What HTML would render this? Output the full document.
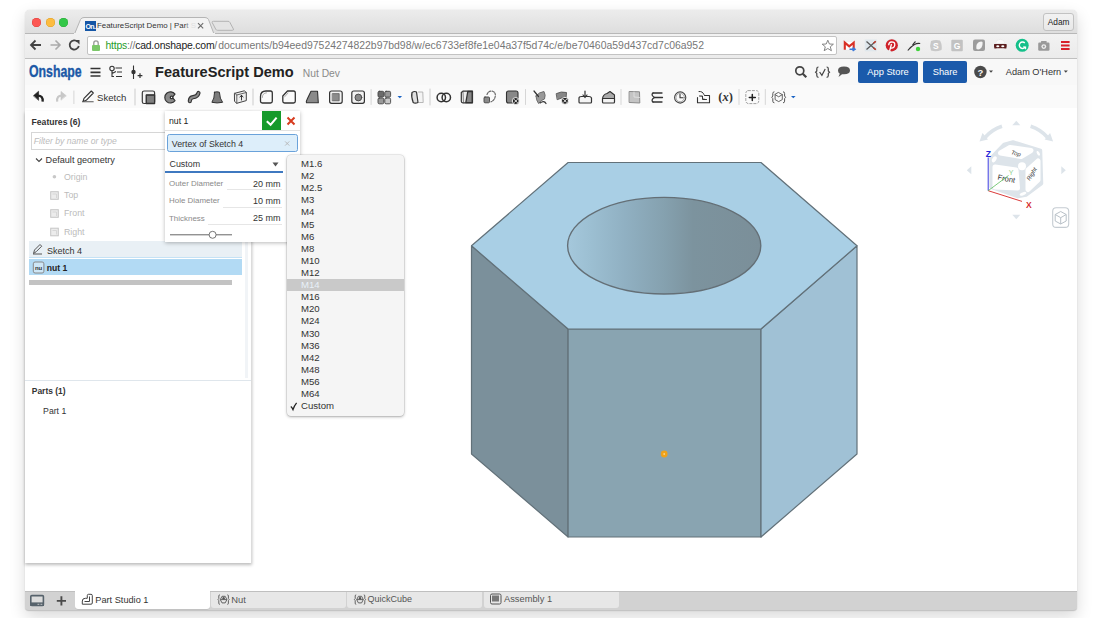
<!DOCTYPE html>
<html><head><meta charset="utf-8">
<style>
*{margin:0;padding:0;box-sizing:border-box}
html,body{width:1100px;height:618px;overflow:hidden;background:#fff;font-family:"Liberation Sans",sans-serif;color:#333}
.a{position:absolute}
.t{position:absolute;white-space:nowrap;line-height:1}
svg{position:absolute;overflow:visible}
</style></head><body>
<!-- window frame -->
<div class="a" style="left:25px;top:10px;width:1052px;height:600.5px;border-radius:5px 5px 4px 4px;background:#fff;box-shadow:0 6px 16px rgba(0,0,0,0.15),0 0 1px rgba(0,0,0,0.25)"></div>
<!-- tab strip -->
<div class="a" style="left:25px;top:10px;width:1052px;height:24px;border-radius:5px 5px 0 0;background:linear-gradient(#ececec,#dedede);border-bottom:1px solid #b8b8b8"></div>
<div class="a" style="left:32px;top:18px;width:9px;height:9px;border-radius:50%;background:#fc5753;box-shadow:inset 0 0 0 0.5px #df3e3a"></div>
<div class="a" style="left:46px;top:18px;width:9px;height:9px;border-radius:50%;background:#fdbc40;box-shadow:inset 0 0 0 0.5px #de9e22"></div>
<div class="a" style="left:59px;top:18px;width:9px;height:9px;border-radius:50%;background:#33c748;box-shadow:inset 0 0 0 0.5px #27aa35"></div>
<svg width="1100" height="40" style="left:0;top:0">
  <path d="M74.5 34 L80.5 19.5 Q81.5 17.5 84 17.5 L205 17.5 Q207.5 17.5 208.5 19.5 L214 34 Z" fill="#f3f3f3" stroke="#b5b5b5" stroke-width="1"/>
  <path d="M213.5 21.3 L228 21.3 Q229.3 21.3 229.9 22.4 L233.4 29 Q233.9 30.3 232.4 30.3 L217.5 30.3 Q216.3 30.3 215.8 29.3 L212.2 22.6 Q211.8 21.3 213.5 21.3 Z" fill="#e4e4e4" stroke="#b3b3b3" stroke-width="1"/>
  <rect x="74" y="33" width="141" height="2" fill="#f3f3f3"/>
</svg>
<div class="a" style="left:85px;top:21px;width:10.5px;height:10px;background:#1556a6"></div>
<div class="t" style="left:85.5px;top:22.5px;font-size:7px;font-weight:bold;color:#fff;letter-spacing:-0.6px">On.</div>
<div class="t" style="left:97px;top:22.3px;font-size:7.9px;color:#333">FeatureScript Demo | Par<span style="color:#888">t</span> <span style="color:#e0e0e0">S</span></div>
<svg width="210" height="40" style="left:0;top:0"><path d="M198 23.1 L203.2 28.3 M203.2 23.1 L198 28.3" stroke="#6a6a6a" stroke-width="1.1"/></svg>
<div class="a" style="left:1043px;top:13.2px;width:30.5px;height:17.6px;border:1px solid #c2c2c2;border-radius:3px;background:linear-gradient(#f2f2f2,#e8e8e8)"></div>
<div class="t" style="left:1047.8px;top:18.4px;font-size:8.3px;color:#222">Adam</div>

<!-- toolbar -->
<div class="a" style="left:25px;top:34px;width:1052px;height:24.8px;background:linear-gradient(#f2f2f2,#ebebeb);border-bottom:1.6px solid #c0c0c0"></div>
<svg width="100" height="60" style="left:0;top:0">
  <path d="M31.5 45 L41 45 M35.5 40.5 L31 45 L35.5 49.5" fill="none" stroke="#444" stroke-width="1.8"/>
  <path d="M50.5 45 L60 45 M55.5 40.5 L60 45 L55.5 49.5" fill="none" stroke="#aaa" stroke-width="1.6"/>
  <path d="M77.6 41.7 A4.6 4.6 0 1 0 78.8 46" fill="none" stroke="#444" stroke-width="1.8"/>
  <path d="M75 40 L79.5 40 L79.5 44.5 Z" fill="#444"/>
</svg>
<div class="a" style="left:87px;top:36.3px;width:749.5px;height:18.7px;background:#fff;border:1px solid #c3c3c3;border-radius:2px"></div>
<svg width="110" height="60" style="left:0;top:0">
  <path d="M93.8 45.5 L93.8 43 A2.2 2.2 0 0 1 98.2 43 L98.2 45.5" fill="none" stroke="#9a9a9a" stroke-width="1.3"/>
  <rect x="92" y="45" width="8" height="6" rx="1" fill="#7cc76a"/>
</svg>
<div class="t" style="left:105.5px;top:41.3px;font-size:10.4px;color:#777;letter-spacing:-0.19px"><span style="color:#1f9d2a">https</span>://<span style="color:#222">cad.onshape.com</span>/</div><div class="t" style="left:218.2px;top:41.3px;font-size:10.45px;color:#777">documents/b94eed97524274822b97bd98/w/ec6733ef8fe1e04a37f5d74c/e/be70460a59d437cd7c06a952</div>
<!-- extension icons -->
<svg width="1100" height="60" style="left:0;top:0">
  <path d="M827.8 40.2 L829.4 44 L833.4 44.2 L830.3 46.8 L831.4 50.7 L827.8 48.5 L824.2 50.7 L825.3 46.8 L822.2 44.2 L826.2 44 Z" fill="#fff" stroke="#777" stroke-width="0.9"/>
  <rect x="843.5" y="41.5" width="11.5" height="8.5" fill="#fff" stroke="#e8e8e8" stroke-width="0.5"/>
  <path d="M844.8 49.8 L844.8 42.6 L849.2 46.3 L853.7 42.6 L853.7 49.8" fill="none" stroke="#d93025" stroke-width="2.1"/>
  <path d="M849.5 49.2 L854 49.2 M852.6 47.6 L855 49.2 L852.6 50.8" fill="none" stroke="#3d79d8" stroke-width="1.5"/>
  <rect x="864.8" y="39.5" width="12" height="11.8" fill="#dfe7ec"/>
  <path d="M866.5 41.5 L875.5 49.5 M875.5 41.5 L866.5 49.5" stroke="#5a5a5a" stroke-width="1.3"/>
  <path d="M873.5 43.3 L875.8 41.2 M873.5 47.7 L875.8 49.8" stroke="#c0392b" stroke-width="1.5"/>
  <circle cx="891.8" cy="45.3" r="6.9" fill="#e6eef0"/>
  <circle cx="891.8" cy="45.3" r="6.1" fill="#d0222a"/>
  <path d="M890.6 48 Q893.8 48.7 894.7 45.6 Q895.4 41.8 891.6 41.8 Q888.6 42 888.7 45.2 M891.5 44 L889.6 51" fill="none" stroke="#fff" stroke-width="1.3"/>
  <path d="M907.8 50.5 Q911 46.5 914.5 44.5 Q917 43 920.2 43.5 M912.5 45 Q914 43 915.5 41.5" fill="none" stroke="#333" stroke-width="1.1"/>
  <circle cx="918" cy="49" r="2.2" fill="#3ed23a"/>
  <path d="M931 41 Q935.5 39.2 940 40.5 Q942.5 45 941.5 50 Q936 52.2 931 50.5 Q929.3 45.5 931 41 Z" fill="#c8c8c8"/>
  <text x="935.8" y="49" font-size="8.5" font-weight="bold" fill="#fff" text-anchor="middle" font-family="Liberation Sans">S</text>
  <rect x="951.3" y="39.8" width="11.5" height="11.5" rx="1" fill="#c2c2c2"/>
  <text x="957" y="48.8" font-size="8.5" font-weight="bold" fill="#fff" text-anchor="middle" font-family="Liberation Sans">G</text>
  <rect x="973" y="39.5" width="12" height="11.5" rx="2" fill="#9c9c9c"/>
  <path d="M976.5 49 Q975.5 44 979 42 Q981.5 41 982.5 42 Q983 46 980.5 48.5 Q978.5 50 976.5 49 Z" fill="#f4f4f4"/>
  <path d="M995.5 43.5 Q996 39.5 1000.3 39.3 Q1004.5 39.5 1005 43.5 Z" fill="#fafafa" stroke="#e0e0e0" stroke-width="0.5"/>
  <path d="M994.2 44 L1006.5 44 Q1007.2 46.5 1006.3 48.5 L994.4 48.5 Q993.6 46.5 994.2 44 Z" fill="#5b1e1e"/>
  <ellipse cx="997.8" cy="46.3" rx="1.6" ry="1" fill="#fff"/><ellipse cx="1002.8" cy="46.3" rx="1.6" ry="1" fill="#fff"/>
  <path d="M996 48.5 Q1000.3 51.5 1004.8 48.5 Z" fill="#f0f0f0"/>
  <circle cx="1022.2" cy="45.3" r="6.5" fill="#15c08a"/>
  <path d="M1024.8 43 A3.2 3.2 0 1 0 1025.3 46.8" fill="none" stroke="#fff" stroke-width="1.4"/>
  <path d="M1023 47 L1025.6 47 L1025.6 49.3" fill="none" stroke="#fff" stroke-width="1.1"/>
  <rect x="1038.2" y="42.5" width="11.3" height="8.2" rx="1.2" fill="#9a9a9a"/>
  <rect x="1041" y="40.9" width="5.6" height="2.4" rx="0.5" fill="#9a9a9a"/>
  <circle cx="1043.8" cy="46.6" r="2.4" fill="#f0f0f0"/>
  <circle cx="1043.8" cy="46.6" r="1.1" fill="#9a9a9a"/>
  <path d="M1061 42 L1069.6 42 M1061 45.5 L1069.6 45.5 M1061 49 L1069.6 49" stroke="#d8202a" stroke-width="1.9"/>
</svg>

<!-- onshape header -->
<div class="a" style="left:25px;top:59px;width:1052px;height:26px;background:#f8f8f8"></div>
<div class="t" style="left:29.4px;top:63.8px;font-size:15.8px;font-weight:bold;color:#1b58a6;transform:scaleX(0.78);transform-origin:0 0;-webkit-text-stroke:0.35px #1b58a6">Onshape</div>
<svg width="160" height="90" style="left:0;top:0">
  <path d="M90.5 68.5 L100.5 68.5 M90.5 72.3 L100.5 72.3 M90.5 76 L100.5 76" stroke="#333" stroke-width="1.7"/>
  <circle cx="112" cy="68.5" r="2.2" fill="none" stroke="#333" stroke-width="1.1"/>
  <path d="M112 70.7 L112 76.5 L114 76.5 M115.5 68 L122 68 M117 72 L122 72 M116 76.5 L122 76.5 M112 73.5 L116 71.5" fill="none" stroke="#333" stroke-width="1.1"/>
  <path d="M133.5 65.5 L133.5 79" stroke="#333" stroke-width="1.1"/>
  <circle cx="133.5" cy="72" r="2.2" fill="#333"/>
  <path d="M137.6 75.6 L142.4 75.6 M140 73.2 L140 78" stroke="#333" stroke-width="1.2"/>
</svg>
<div class="t" style="left:155px;top:65px;font-size:14.6px;font-weight:bold;color:#222">FeatureScript Demo</div>
<div class="t" style="left:302.8px;top:69.2px;font-size:10.3px;color:#8a8a8a">Nut Dev</div>
<svg width="1100" height="90" style="left:0;top:0">
  <circle cx="799.8" cy="70.8" r="4" fill="none" stroke="#444" stroke-width="1.7"/>
  <path d="M802.8 73.8 L806.3 77.3" stroke="#444" stroke-width="2.2"/>
  <path d="M818.5 67 Q816.8 67 816.8 68.8 L816.8 71 L815.6 72.2 L816.8 73.4 L816.8 75.6 Q816.8 77.4 818.5 77.4 M826.6 67 Q828.3 67 828.3 68.8 L828.3 71 L829.5 72.2 L828.3 73.4 L828.3 75.6 Q828.3 77.4 826.6 77.4" fill="none" stroke="#444" stroke-width="1.2"/>
  <path d="M819.6 72 L821.9 75.3 L825.2 69" fill="none" stroke="#444" stroke-width="1.2"/>
  <path d="M844 66.5 Q850 66.5 850 70.5 Q850 74.3 844 74.3 L842 74.3 L838.5 77 L839.8 73.8 Q838 72.8 838 70.5 Q838 66.5 844 66.5 Z" fill="#555"/>
</svg>
<div class="a" style="left:857.7px;top:60.5px;width:60px;height:22px;background:#1b5aab;border-radius:2px"></div>
<div class="t" style="left:867.3px;top:67.6px;font-size:9.3px;color:#fff">App Store</div>
<div class="a" style="left:923px;top:60.5px;width:44px;height:22px;background:#1b5aab;border-radius:2px"></div>
<div class="t" style="left:932.7px;top:67.6px;font-size:9.3px;color:#fff">Share</div>
<svg width="1100" height="90" style="left:0;top:0">
  <circle cx="980.4" cy="72" r="6.2" fill="#4a4a4a"/>
  <text x="980.4" y="75.6" font-size="9.5" font-weight="bold" fill="#f8f8f8" text-anchor="middle" font-family="Liberation Sans">?</text>
  <path d="M989 70.5 L993 70.5 L991 72.7 Z" fill="#444"/>
  <path d="M1063.8 70.5 L1067.8 70.5 L1065.8 72.7 Z" fill="#444"/>
</svg>
<div class="t" style="left:1005.8px;top:67.6px;font-size:9.2px;color:#333">Adam O'Hern</div>

<!-- tools row -->
<div class="a" style="left:25px;top:85px;width:1052px;height:23px;background:#fafafa"></div>

<svg width="1100" height="110" style="left:0;top:0" fill="none" stroke="#333" stroke-width="1.3" stroke-linejoin="round" stroke-linecap="round">
  <!-- undo/redo -->
  <path d="M33.6 95.6 L38.6 91.2 L38.6 100 Z" fill="#222" stroke="#222" stroke-width="0.6"/>
  <path d="M37.5 95.6 Q43.3 95.4 42.6 101.6" stroke="#222" stroke-width="2.3" stroke-linecap="butt"/>
  <path d="M66 95.6 L61 91.4 L61 99.8 Z" fill="#c8c8c8" stroke="#c8c8c8" stroke-width="0.6"/>
  <path d="M62 95.6 Q56.5 95.4 57.2 101.6" stroke="#c8c8c8" stroke-width="2.1" stroke-linecap="butt"/>
  <path d="M73.9 91 L73.9 103.6" stroke="#d6d6d6" stroke-width="1"/>
  <!-- pencil -->
  <path d="M83 101.5 L84 98.3 L91.3 91 L93.3 93 L86.2 100.3 Z" stroke="#333" stroke-width="1.1"/>
  <path d="M82.5 101.8 L93.2 101.8" stroke="#555" stroke-width="1.1"/>
  <path d="M135 89 L135 105" stroke="#ccc" stroke-width="1"/>
  <!-- extrude -->
  <rect x="142.3" y="91" width="12.3" height="12.5" rx="1.8" fill="#f4f4f4" stroke="#3a3a3a" stroke-width="1.2"/>
  <rect x="146.3" y="95" width="8.3" height="8.5" fill="#808080"/>
  <path d="M146.3 103.5 L146.3 95 L154.6 95" stroke="#3a3a3a" stroke-width="0.8"/>
  <!-- revolve -->
  <path d="M175 94.2 A5.6 5.6 0 1 0 175 100.6 L172.3 97.4 Z" fill="#8a8a8a" stroke="#333" stroke-width="1.2" stroke-linejoin="round"/>
  <circle cx="171.6" cy="97.4" r="1.3" fill="#fafafa"/>
  <!-- sweep -->
  <path d="M189.8 101.2 Q190 97.6 193 97.2 Q197.5 96.8 198.5 93" stroke="#333" stroke-width="4.2"/>
  <path d="M189.8 101.2 Q190 97.6 193 97.2 Q197.5 96.8 198.5 93" stroke="#8a8a8a" stroke-width="2"/>
  <!-- loft -->
  <path d="M214.6 92.2 Q216.9 91.3 219.4 92.2 Q219.8 99 222.6 102.3 Q217 103.6 211.9 102.3 Q214.4 99 214.6 92.2 Z" fill="#7c7c7c" stroke="#333" stroke-width="1"/>
  <!-- thicken -->
  <path d="M234.8 93.3 L244.3 90.8 L246.3 92.5 L246.3 100.6 L236.8 103.3 L234.8 101.6 Z" fill="#eee" stroke="#444" stroke-width="1"/>
  <path d="M234.8 93.3 L236.8 95 L246.3 92.5 M236.8 95 L236.8 103.3" stroke="#444" stroke-width="0.8"/>
  <path d="M241.5 100 L241.5 95.5 M240 97 L241.5 95.2 L243 97" stroke="#222" stroke-width="0.9"/>
  <path d="M253 89 L253 105" stroke="#ccc" stroke-width="1"/>
  <!-- fillet/chamfer -->
  <path d="M260.5 96.5 Q260.5 91 266 91 L270.5 91 Q272.3 91 272.3 93 L272.3 101.3 Q272.3 103 270.5 103 L262.3 103 Q260.5 103 260.5 101.3 Z" fill="#fafafa" stroke="#333" stroke-width="1.3"/>
  <path d="M262.3 97.5 Q262.3 93 266.5 92.8" stroke="#999" stroke-width="0.8"/>
  <path d="M282.8 96 L287.5 91 L293.5 91 Q295.3 91 295.3 93 L295.3 101.3 Q295.3 103 293.5 103 L284.6 103 Q282.8 103 282.8 101.3 Z" fill="#fafafa" stroke="#333" stroke-width="1.3"/>
  <path d="M284.5 97 L288 93" stroke="#999" stroke-width="0.8"/>
  <path d="M311 91.2 L317.5 91.2 L318.3 102.8 L306.5 102.8 Q306 101.5 306.8 100 Z" fill="#8a8a8a" stroke="#333" stroke-width="1.1"/>
  <rect x="329.6" y="91" width="12.6" height="12.3" rx="2" fill="#f2f2f2" stroke="#333" stroke-width="1.2"/>
  <rect x="332.6" y="93.6" width="6.6" height="7.2" fill="#8c8c8c" stroke="#555" stroke-width="0.7"/>
  <rect x="351.8" y="91" width="12.6" height="12.3" rx="2" fill="#f2f2f2" stroke="#333" stroke-width="1.2"/>
  <circle cx="358.4" cy="97.5" r="3.4" fill="#888" stroke="#444" stroke-width="0.9"/>
  <path d="M371.1 89.5 L371.1 104.5" stroke="#d6d6d6" stroke-width="1"/>
  <!-- pattern -->
  <g stroke="#444" stroke-width="0.9">
  <rect x="378" y="91.3" width="5.8" height="5.8" rx="1.3" fill="#6c6c6c"/>
  <rect x="384.8" y="91.3" width="5.8" height="5.8" rx="1.3" fill="#999"/>
  <rect x="378" y="98" width="5.8" height="5.8" rx="1.3" fill="#999"/>
  <rect x="384.8" y="98" width="5.8" height="5.8" rx="1.3" fill="#c8c8c8"/>
  </g>
  <path d="M397.5 96 L402.1 96 L399.8 98.3 Z" fill="#1b64c4" stroke="none"/>
  <!-- mirror -->
  <path d="M412 92.5 Q414.5 90.8 416.5 92 L418 102.5 Q415 103.8 413.2 102.5 Q411 97 412 92.5 Z" fill="#e0e0e0" stroke="#333" stroke-width="1.2"/>
  <path d="M418.5 92 L422.8 92 L423.2 102.5 L419.5 102.5" fill="#f4f4f4" stroke="#b0b0b0" stroke-width="0.9"/>
  <path d="M430 89 L430 105" stroke="#ccc" stroke-width="1"/>
  <!-- boolean -->
  <circle cx="441.3" cy="97.5" r="4.2" stroke="#333" stroke-width="1.5"/>
  <circle cx="446.3" cy="97.5" r="4.2" stroke="#333" stroke-width="1.5"/>
  <!-- split -->
  <path d="M461.3 92.5 L463 91.2 L472.5 91.2 L472.5 102.8 L462.8 102.8 Q461.3 102.8 461.3 101.3 Z" fill="#eee" stroke="#333" stroke-width="1.2"/>
  <path d="M467.8 91.5 L465.8 102.6 L472.2 102.6 L472.2 91.5 Z" fill="#888"/>
  <path d="M463 91.2 L463.5 102.8" stroke="#555" stroke-width="0.7"/>
  <!-- transform -->
  <rect x="484" y="97" width="5.5" height="5.8" rx="1" fill="#8a8a8a" stroke="#444" stroke-width="0.9"/>
  <path d="M487 94.5 Q488.5 90.5 492.5 91.2 Q496 92.5 495.2 96.5 Q494.5 100.5 491 101.8" stroke="#666" stroke-width="1.2" stroke-dasharray="2 1.3"/>
  <!-- delete part -->
  <path d="M506.5 93 Q506.5 91 508.5 91 L516 91 Q518 91 518 93 L518 98.5 L512.5 103 L508.5 103 Q506.5 103 506.5 101 Z" fill="#888" stroke="#333" stroke-width="1.1"/>
  <circle cx="515.8" cy="101" r="3.5" fill="#222" stroke="#fafafa" stroke-width="0.9"/>
  <path d="M514.3 99.5 L517.3 102.5 M517.3 99.5 L514.3 102.5" stroke="#fff" stroke-width="0.9"/>
  <path d="M525.5 89.5 L525.5 104.5" stroke="#d6d6d6" stroke-width="1"/>
  <!-- surface icons -->
  <path d="M536 96 Q539 92 544 91.5 Q546 95 544.5 99 Q541 100 538.5 103.5 Q536 100 536 96 Z" fill="#999" stroke="#666" stroke-width="0.9"/>
  <path d="M534 91 L538.5 96.5 M540 103 Q544 100 546 103.5" stroke="#333" stroke-width="1.2"/>
  <path d="M556.5 93.5 Q561 91 566.5 92.5 L566 98.5 Q561.5 97 557.5 99.5 Z" fill="#888" stroke="#555" stroke-width="0.9"/>
  <circle cx="565" cy="100.8" r="3.5" fill="#222" stroke="#fafafa" stroke-width="0.9"/>
  <path d="M563.5 99.3 L566.5 102.3 M566.5 99.3 L563.5 102.3" stroke="#fff" stroke-width="0.9"/>
  <path d="M579 98 L579 102 Q579 103 580 103 L590.5 103 Q591.5 103 591.5 102 L591.5 98 Q591 96.5 589 96.5 L581.5 96.5 Q579 96.5 579 98 Z" fill="#f4f4f4" stroke="#333" stroke-width="1.2"/>
  <path d="M585 91 L585 97 M583 95 L585 97.5 L587 95" stroke="#333" stroke-width="1.2"/>
  <path d="M602.5 98.5 L602.5 102 Q602.5 103 603.5 103 L613.5 103 Q614.5 103 614.5 102 L614.5 98.5 Z" fill="#f4f4f4" stroke="#333" stroke-width="1.2"/>
  <path d="M602.5 98.5 Q603 94.5 607 93.5 L610 91.5 L614.5 95 L614.5 98.5 Z" fill="#aaa" stroke="#333" stroke-width="1.1"/>
  <path d="M621 89.5 L621 104.5" stroke="#d6d6d6" stroke-width="1"/>
  <path d="M629.5 91.5 L639.5 91.8 L639.8 103 L629.5 102.5 Z" fill="#c4c4c4" stroke="#8a8a8a" stroke-width="1"/>
  <path d="M634 92 L634 97 L639.5 97.5" stroke="#e6e6e6" stroke-width="0.8"/>
  <g stroke="#333" stroke-width="1.3">
  <path d="M653 93 L662 93 M654.5 97.5 L662.5 97.5 M653 102 L662 102"/>
  <path d="M653 93 Q650.5 95 654.5 97.5 Q650.5 100 653 102"/>
  </g>
  <circle cx="680.2" cy="97.5" r="5.6" stroke="#444" stroke-width="1.1"/>
  <circle cx="680.2" cy="97.5" r="4.2" stroke="#888" stroke-width="0.7"/>
  <path d="M680 94.3 L680 97.8 L683 97.8" stroke="#333" stroke-width="1.1"/>
  <path d="M697.5 97.5 L697.5 102.8 L709.5 102.8 L709.5 95.5 L704.5 95.5" stroke="#333" stroke-width="1.1"/>
  <path d="M699.5 96 L702.5 96 L702.5 99.5 L706.5 99.5" fill="#aaa" stroke="#333" stroke-width="1"/>
  <path d="M699 91.5 Q702.5 91 704 94.5" stroke="#333" stroke-width="1"/>
  <path d="M739 89.5 L739 104.5" stroke="#d6d6d6" stroke-width="1"/>
  <rect x="745.8" y="90.6" width="13" height="13" rx="2.5" stroke="#999" stroke-width="0.9" stroke-dasharray="2.2 1.8"/>
  <path d="M752.3 94.5 L752.3 100.5 M749.3 97.5 L755.3 97.5" stroke="#222" stroke-width="1.5"/>
  <path d="M765.3 89.5 L765.3 104.5" stroke="#d6d6d6" stroke-width="1"/>
  <path d="M774 91.8 Q772.8 91.8 772.8 93.5 L772.8 96 L771.8 97.3 L772.8 98.6 L772.8 101.2 Q772.8 102.8 774 102.8 M783.4 91.8 Q784.6 91.8 784.6 93.5 L784.6 96 L785.6 97.3 L784.6 98.6 L784.6 101.2 Q784.6 102.8 783.4 102.8" stroke="#555" stroke-width="1"/>
  <path d="M778.7 92.6 L782.3 94.6 L782.3 99.6 L778.7 101.6 L775.1 99.6 L775.1 94.6 Z M775.1 94.6 L778.7 96.8 L782.3 94.6" stroke="#555" stroke-width="0.9"/>
  <path d="M791 96 L795.6 96 L793.3 98.3 Z" fill="#1b64c4" stroke="none"/>
</svg>
<div class="t" style="left:97px;top:92.5px;font-size:9.6px;color:#333">Sketch</div>
<div class="t" style="left:718.3px;top:90.5px;font-size:12.5px;font-weight:bold;font-family:'Liberation Serif';color:#333">(<i>x</i>)</div>

<!-- left panel -->
<div class="a" style="left:25px;top:111px;width:227px;height:452px;background:#fff;border-right:1px solid #dcdcdc;box-shadow:0 2px 3px rgba(0,0,0,0.26)"></div>
<div class="t" style="left:31.6px;top:117.6px;font-size:8.6px;font-weight:bold;color:#333">Features (6)</div>
<div class="a" style="left:31px;top:132px;width:140px;height:18px;border:1px solid #d6d6d6;background:#fff"></div>
<div class="t" style="left:33.8px;top:137px;font-size:8.6px;font-style:italic;color:#bbb">Filter by name or type</div>
<svg width="260" height="300" style="left:0;top:0" fill="none">
  <path d="M36 158.5 L39 161.5 L42 158.5" stroke="#444" stroke-width="1.1"/>
  <circle cx="54.4" cy="176.8" r="1.8" fill="#c8c8c8"/>
  <rect x="50.7" y="191.7" width="7.6" height="7.6" fill="#ececec" stroke="#c6c6c6" stroke-width="1"/><path d="M52.5 194 L56.5 194 L56.5 198" stroke="#d2d2d2" stroke-width="0.8"/>
  <rect x="50.7" y="209.7" width="7.6" height="7.6" fill="#ececec" stroke="#c6c6c6" stroke-width="1"/><path d="M52.5 212 L56.5 212 L56.5 216" stroke="#d2d2d2" stroke-width="0.8"/>
  <rect x="50.7" y="228.2" width="7.6" height="7.6" fill="#ececec" stroke="#c6c6c6" stroke-width="1"/><path d="M52.5 230.5 L56.5 230.5 L56.5 234.5" stroke="#d2d2d2" stroke-width="0.8"/>
</svg>
<div class="t" style="left:45.6px;top:156px;font-size:9.1px;color:#333">Default geometry</div>
<div class="t" style="left:64px;top:172.5px;font-size:8.8px;color:#bbb">Origin</div>
<div class="t" style="left:64px;top:191px;font-size:8.8px;color:#bbb">Top</div>
<div class="t" style="left:64px;top:209px;font-size:8.8px;color:#bbb">Front</div>
<div class="t" style="left:64px;top:227.5px;font-size:8.8px;color:#bbb">Right</div>
<div class="a" style="left:29px;top:240.8px;width:212.5px;height:17.5px;background:#e9f0f5;border-bottom:1.3px solid #c5e2f5"></div>
<div class="a" style="left:29px;top:259px;width:212.5px;height:16px;background:#b2daf4"></div>
<svg width="260" height="300" style="left:0;top:0" fill="none">
  <path d="M33.5 253.5 L34.5 250 L40 244.5 L41.7 246.2 L36.2 251.7 Z M33 254 L42 254" stroke="#555" stroke-width="1"/>
  <rect x="33.3" y="262" width="10.6" height="11" rx="1.8" fill="#cde6f6" stroke="#888" stroke-width="1"/>
  <text x="38.6" y="269.8" font-size="6" fill="#333" text-anchor="middle" font-family="Liberation Sans" font-weight="bold">nu</text>
</svg>
<div class="t" style="left:47px;top:246.5px;font-size:9px;color:#333">Sketch 4</div>
<div class="t" style="left:46.7px;top:264.3px;font-size:8.6px;font-weight:bold;color:#222">nut 1</div>
<div class="a" style="left:29px;top:280px;width:203px;height:4.5px;background:#c3c3c3"></div>
<div class="a" style="left:245px;top:112px;width:3px;height:266px;background:#f1f4f7"></div>
<div class="a" style="left:25px;top:379.5px;width:226px;height:1px;background:#dfe6ec"></div>
<div class="t" style="left:31.8px;top:387px;font-size:8.45px;font-weight:bold;color:#333">Parts (1)</div>
<div class="t" style="left:43.1px;top:406.8px;font-size:8.7px;color:#333">Part 1</div>

<!-- feature dialog -->
<div class="a" style="left:165px;top:111px;width:135px;height:131px;background:#fff;box-shadow:0 1px 4px rgba(0,0,0,0.28)"></div>
<div class="t" style="left:169px;top:117px;font-size:8.7px;color:#222">nut 1</div>
<div class="a" style="left:262.4px;top:111.3px;width:19px;height:19px;background:#159a2b"></div>
<svg width="310" height="250" style="left:0;top:0" fill="none">
  <path d="M266.8 121.2 L270.6 124.7 L276.6 117.6" stroke="#fff" stroke-width="2"/>
  <path d="M287.5 117.5 L294.5 124.5 M294.5 117.5 L287.5 124.5" stroke="#d73b1e" stroke-width="2"/>
</svg>
<div class="a" style="left:165px;top:130.4px;width:135px;height:1px;background:#e2e2e2"></div>
<div class="a" style="left:167.2px;top:134.2px;width:130.8px;height:17.6px;background:#ddeefa;border:1px solid #6aa2da;border-radius:2.5px"></div>
<div class="t" style="left:171.8px;top:139.5px;font-size:8.8px;color:#333">Vertex of Sketch 4</div>
<svg width="300" height="160" style="left:0;top:0"><path d="M285.1 141.4 L289.3 145.6 M289.3 141.4 L285.1 145.6" stroke="#b4b4b4" stroke-width="0.9"/></svg>
<div class="t" style="left:169.5px;top:160px;font-size:8.9px;color:#333">Custom</div>
<svg width="310" height="250" style="left:0;top:0"><path d="M272.5 162.5 L278.5 162.5 L275.5 166.5 Z" fill="#555"/></svg>
<div class="a" style="left:165px;top:171px;width:117.5px;height:1.5px;background:#3f79c0"></div>
<div class="t" style="left:169px;top:180px;font-size:7.95px;color:#8a8a8a">Outer Diameter</div>
<div class="t" style="left:169px;top:197.2px;font-size:7.95px;color:#8a8a8a">Hole Diameter</div>
<div class="t" style="left:169px;top:214.5px;font-size:7.95px;color:#8a8a8a">Thickness</div>
<div class="t" style="left:252.9px;top:179.7px;font-size:9px;color:#333">20 mm</div>
<div class="t" style="left:252.9px;top:197px;font-size:9px;color:#333">10 mm</div>
<div class="t" style="left:252.9px;top:214.4px;font-size:9px;color:#333">25 mm</div>
<div class="a" style="left:226.8px;top:189px;width:55px;height:1px;background:#e6e6e6"></div>
<div class="a" style="left:223.4px;top:206.5px;width:58.5px;height:1px;background:#e6e6e6"></div>
<div class="a" style="left:208.3px;top:224px;width:73.5px;height:1px;background:#e6e6e6"></div>
<svg width="310" height="250" style="left:0;top:0">
  <path d="M170 234.8 L232 234.8" stroke="#666" stroke-width="1"/>
  <circle cx="212.6" cy="234.8" r="3.5" fill="#fff" stroke="#666" stroke-width="0.9"/>
</svg>

<!-- dropdown -->
<div class="a" style="left:287px;top:154.5px;width:117px;height:261px;background:#f5f5f5;border-radius:4px;box-shadow:0 1px 3px rgba(0,0,0,0.3),0 0 0 0.5px rgba(0,0,0,0.12)"></div>
<div class="a" style="left:287px;top:279.3px;width:117px;height:11.7px;background:#c9c9c9"></div>
<div class="a" id="dd" style="left:301px;top:158px;font-size:9.6px;color:#333;line-height:12.115px;white-space:nowrap">M1.6<br>M2<br>M2.5<br>M3<br>M4<br>M5<br>M6<br>M8<br>M10<br>M12<br><span style="color:#e8f0f8">M14</span><br>M16<br>M20<br>M24<br>M30<br>M36<br>M42<br>M48<br>M56<br>M64<br>Custom</div>
<svg width="300" height="420" style="left:0;top:0"><path d="M290.8 406.6 Q292 407.5 293 409.6 Q294.3 405.5 296.6 402.8" fill="none" stroke="#222" stroke-width="1.3"/></svg>

<!-- nut -->
<svg width="1100" height="618" style="left:0;top:0">
  <defs>
    <linearGradient id="hole" x1="567" y1="0" x2="761" y2="0" gradientUnits="userSpaceOnUse">
      <stop offset="0" stop-color="#a5c8dc"/>
      <stop offset="0.12" stop-color="#9cbfd2"/>
      <stop offset="0.3" stop-color="#90b0c2"/>
      <stop offset="0.5" stop-color="#85a1af"/>
      <stop offset="0.65" stop-color="#7c939e"/>
      <stop offset="1" stop-color="#7b8f99"/>
    </linearGradient>
  </defs>
  <g stroke="#627179" stroke-width="1.2" stroke-linejoin="round">
    <polygon points="471.5,245.8 568.1,329 568.1,537 471.5,454" fill="#7b909b"/>
    <polygon points="568.1,329 761,329 761,537 568.1,537" fill="#89a4b1"/>
    <polygon points="761,329 857,245.8 857,454 761,537" fill="#a0c1d5"/>
    <polygon points="568.1,162.5 761,162.5 857,245.8 761,329 568.1,329 471.5,245.8" fill="#a9cfe5"/>
    <ellipse cx="664.2" cy="245.7" rx="96.6" ry="48.3" fill="url(#hole)" stroke="#646f76" stroke-width="1.35"/>
  </g>
  <circle cx="664.2" cy="454" r="3.4" fill="#f0a21a"/>
  <circle cx="664.2" cy="454" r="0.9" fill="#f7d58a"/>
</svg>

<!-- view cube -->
<svg width="1100" height="618" style="left:0;top:0">
  <g fill="#dde4ea">
    <path d="M1012.3 125.3 L1016.3 120.8 L1020.3 125.3 Z"/>
    <path d="M1012.3 214.7 L1016.3 219.2 L1020.3 214.7 Z"/>
    <path d="M971.3 166.3 L966.8 170.3 L971.3 174.3 Z"/>
    <path d="M1061.3 166.3 L1065.8 170.3 L1061.3 174.3 Z"/>
  </g>
  <g fill="none" stroke="#dde4ea" stroke-width="3.6">
    <path d="M985 137.5 Q992 129.5 1002 126.3"/>
    <path d="M1030.6 126.3 Q1040.6 129.5 1047.6 137.5"/>
  </g>
  <path d="M979.5 141.5 L988 139.5 L982.5 133 Z" fill="#dde4ea"/>
  <path d="M1053.1 141.5 L1044.6 139.5 L1050.1 133 Z" fill="#dde4ea"/>
  <path d="M991 158 L1004 144.5 L1013 142 L1040.5 150.5 L1041.5 183.5 L1026 195 L1018 196.5 L991 187 Z" fill="#dde4ea" stroke="#dde4ea" stroke-width="3.5" stroke-linejoin="round"/>
  <g fill="#fff" stroke="#fff" stroke-width="5" stroke-linejoin="round">
    <path d="M995 167 L1016 170 L1017.5 188 L995 187 Z"/>
    <path d="M1028 170 L1038 161 L1038 180 L1028 189.5 Z"/>
    <path d="M1000.5 153 L1010 147.5 L1031 150.5 L1021 156.5 Z"/>
  </g>
  <g fill="#fff">
    <circle cx="1022" cy="166.3" r="4"/>
    <ellipse cx="994.3" cy="159.3" rx="2" ry="3.3" transform="rotate(30 994.3 159.3)"/>
    <ellipse cx="1038.3" cy="153.3" rx="1.3" ry="2.6" transform="rotate(-30 1038.3 153.3)"/>
    <ellipse cx="1023" cy="193.8" rx="3.5" ry="1.5" transform="rotate(-20 1023 193.8)"/>
  </g>
  <text x="1015.5" y="155.3" font-size="6" fill="#333" font-family="Liberation Sans" font-style="italic" transform="rotate(16 1015.5 155)" text-anchor="middle">Top</text>
  <text x="1006" y="181.3" font-size="7.6" fill="#333" font-family="Liberation Sans" transform="rotate(11 1006 181)" text-anchor="middle">Front</text>
  <text x="1033.5" y="175" font-size="6" fill="#333" font-family="Liberation Sans" font-style="italic" transform="rotate(-58 1033.5 175)" text-anchor="middle">Right</text>
  <path d="M988.2 190.7 L988.2 157.5" stroke="#3a3ae0" stroke-width="1"/>
  <path d="M988.2 190.7 L1022 201.4" stroke="#db3c3c" stroke-width="1"/>
  <path d="M988.2 190.7 L1008.5 175.5" stroke="#5cbf5c" stroke-width="0.8"/>
  <text x="988.4" y="156.5" font-size="8.5" font-weight="bold" fill="#2626d8" text-anchor="middle" font-family="Liberation Sans">Z</text>
  <text x="1028.8" y="208" font-size="8.5" font-weight="bold" fill="#d62c2c" text-anchor="middle" font-family="Liberation Sans">X</text>
  <text x="1011" y="174.5" font-size="7" fill="#8fd08f" text-anchor="middle" font-family="Liberation Sans">Y</text>
  <rect x="1052.7" y="207.7" width="16" height="19.7" rx="3.5" fill="none" stroke="#c5ccd2" stroke-width="1.1"/>
  <path d="M1060.7 211.5 L1066.2 214.5 L1066.2 221 L1060.7 224 L1055.2 221 L1055.2 214.5 Z M1055.2 214.5 L1060.7 217.7 L1066.2 214.5 M1060.7 217.7 L1060.7 224" fill="none" stroke="#b9c1c8" stroke-width="1"/>
</svg>

<!-- bottom tab bar -->
<div class="a" style="left:25px;top:590.5px;width:1052px;height:20px;background:#d2d2d2;border-top:1px solid #bfbfbf;border-bottom:1px solid #c4c4c4;border-radius:0 0 4px 4px"></div>
<div class="a" style="left:74.5px;top:590.5px;width:135px;height:18px;background:#fff;border-radius:0 0 3px 3px;box-shadow:0 0.5px 0.5px rgba(0,0,0,0.15)"></div>
<div class="a" style="left:211px;top:591.5px;width:134.5px;height:16.7px;background:#e7e7e7;border-radius:0 0 3px 3px"></div>
<div class="a" style="left:347px;top:591.5px;width:135px;height:16.7px;background:#e7e7e7;border-radius:0 0 3px 3px"></div>
<div class="a" style="left:483.6px;top:591.5px;width:135px;height:16.7px;background:#e7e7e7;border-radius:0 0 3px 3px"></div>
<svg width="700" height="618" style="left:0;top:0" fill="none">
  <rect x="30.8" y="595.6" width="12.6" height="9.8" rx="1" fill="#dcdcdc" stroke="#56626b" stroke-width="1.6"/>
  <rect x="30.2" y="602.4" width="13.8" height="3.6" fill="#56626b"/>
  <path d="M37.5 604.3 L39.3 604.3 M40.5 604.3 L42.3 604.3" stroke="#d0d0d0" stroke-width="0.9"/>
  <path d="M61.4 596.3 L61.4 605.5 M56.8 600.9 L66 600.9" stroke="#4a4a4a" stroke-width="1.9"/>
  <path d="M82.3 604.2 L82.3 601 Q82.3 598.3 85.3 598.3 L87.3 598.3 L87.3 595.5 Q87.3 594.3 88.5 594.3 L91 594.3 Q92.3 594.3 92.3 595.5 L92.3 603 Q92.3 604.2 91 604.2 Z M84.5 601.5 L89.5 601.5 L89.5 596.5" stroke="#444" stroke-width="1"/>
  <g><path d="M219.8 594.8 Q218.8 594.8 218.8 596.0 L218.8 598.6 L218.0 599.6 L218.8 600.6 L218.8 603.2 Q218.8 604.4 219.8 604.4 M227.4 594.8 Q228.4 594.8 228.4 596.0 L228.4 598.6 L229.2 599.6 L228.4 600.6 L228.4 603.2 Q228.4 604.4 227.4 604.4" stroke="#555" stroke-width="0.9" fill="none"/>
    <path d="M220.3 599.6 L222.0 596.3 L225.2 596.3 L226.9 599.6 L225.2 602.9 L222.0 602.9 Z M220.3 599.6 L226.9 599.6" stroke="#555" stroke-width="0.9" fill="none"/>
    <circle cx="223.6" cy="598.3" r="1.2" fill="#555"/><path d="M356.2 594.8 Q355.2 594.8 355.2 596.0 L355.2 598.6 L354.4 599.6 L355.2 600.6 L355.2 603.2 Q355.2 604.4 356.2 604.4 M363.8 594.8 Q364.8 594.8 364.8 596.0 L364.8 598.6 L365.6 599.6 L364.8 600.6 L364.8 603.2 Q364.8 604.4 363.8 604.4" stroke="#555" stroke-width="0.9" fill="none"/>
    <path d="M356.7 599.6 L358.4 596.3 L361.6 596.3 L363.3 599.6 L361.6 602.9 L358.4 602.9 Z M356.7 599.6 L363.3 599.6" stroke="#555" stroke-width="0.9" fill="none"/>
    <circle cx="360.0" cy="598.3" r="1.2" fill="#555"/></g>
  <rect x="490.5" y="594" width="10.5" height="10" rx="1.5" stroke="#555" stroke-width="1"/>
  <rect x="492" y="595.5" width="7" height="6" fill="#777"/>
</svg>
<div class="t" style="left:95.3px;top:596px;font-size:9.2px;color:#333">Part Studio 1</div>
<div class="t" style="left:231.3px;top:595.3px;font-size:9.4px;color:#555">Nut</div>
<div class="t" style="left:367.4px;top:595.3px;font-size:9px;color:#555">QuickCube</div>
<div class="t" style="left:504px;top:595.3px;font-size:9.3px;color:#555">Assembly 1</div>
</body></html>
